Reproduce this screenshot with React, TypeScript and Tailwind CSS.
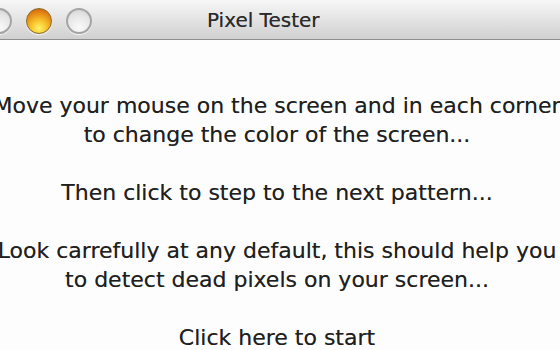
import React from "react";

const Light = ({ kind }: { kind: "gray" | "yellow" }) =>
  kind === "yellow" ? (
    <div className="w-[26px] h-[26px] shrink-0 rounded-full border border-[#8a6a2a] bg-[radial-gradient(circle_at_50%_80%,#fff36a_0%,#f7c22a_35%,#e07a10_75%,#a85a10_100%)] shadow-[0_1px_1px_rgba(255,255,255,0.8)]" />
  ) : (
    <div className="w-[26px] h-[26px] shrink-0 rounded-full border-[2px] border-[#a4a4a4] bg-[radial-gradient(circle_at_50%_80%,#fafafa_0%,#e6e6e6_60%,#cfcfcf_100%)] shadow-[0_1px_1px_rgba(255,255,255,0.8)]" />
  );

export default function App() {
  return (
    <div className="w-[560px] h-[350px] overflow-hidden bg-[#fdfdfd] font-['DejaVu_Sans',sans-serif]">
      <div className="h-[40px] flex items-center bg-gradient-to-b from-[#f7f7f7] to-[#d0d0d0] border-b border-[#8e8e8e]">
        <div className="-ml-[14px] flex items-center gap-[14px] pt-[2px]">
          <Light kind="gray" />
          <Light kind="yellow" />
          <Light kind="gray" />
        </div>
        <div className="ml-[115px] text-[20px] text-[#2a2a2a] [text-shadow:0_0_0.6px_rgba(0,0,0,0.5)]">
          Pixel Tester
        </div>
      </div>
      <div className="pt-[51px] pr-[6px] flex flex-col items-center text-center text-[22px] leading-[29px] text-[#1f1f1f] whitespace-nowrap [text-shadow:0_0_0.6px_rgba(0,0,0,0.5)]">
        <p>Move your mouse on the screen and in each corner</p>
        <p>to change the color of the screen...</p>
        <p>&nbsp;</p>
        <p>Then click to step to the next pattern...</p>
        <p>&nbsp;</p>
        <p>Look carrefully at any default, this should help you</p>
        <p>to detect dead pixels on your screen...</p>
        <p>&nbsp;</p>
        <p>Click here to start</p>
      </div>
    </div>
  );
}
